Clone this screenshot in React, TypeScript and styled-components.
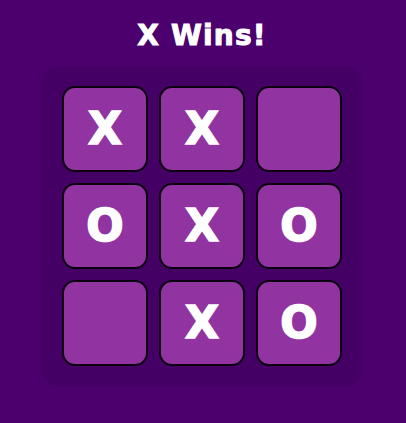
import React from "react";
import styled, { createGlobalStyle } from "styled-components";

const Global = createGlobalStyle`
  html, body { margin: 0; padding: 0; background: #4b006e; }
  body { font-family: "DejaVu Sans", "Liberation Sans", sans-serif; }
`;

const Page = styled.main`
  width: 406px;
  height: 423px;
  background: #4b006e;
  display: flex;
  flex-direction: column;
  align-items: center;
  box-sizing: border-box;
  padding-top: 19px;
  padding-right: 2px;
`;

const Title = styled.h1`
  margin: 0 0 13px;
  height: 34px;
  line-height: 34px;
  font-family: "DejaVu Sans", sans-serif;
  font-size: 28px;
  font-weight: 700;
  color: #ffffff;
  letter-spacing: 1.2px;
  -webkit-text-stroke: 1px #ffffff;
`;

const Board = styled.div`
  display: grid;
  grid-template-columns: repeat(3, 86px);
  grid-template-rows: repeat(3, 86px);
  gap: 11px;
  padding: 20px;
  background: #440064;
  border-radius: 16px;
`;

const Cell = styled.button<{ $mark: string }>`
  box-sizing: border-box;
  width: 86px;
  height: 86px;
  padding: 0;
  border: 2px solid #0a0010;
  border-radius: 13px;
  background: #9133a1;
  color: #ffffff;
  font-family: "DejaVu Sans", sans-serif;
  font-weight: 700;
  font-size: 44px;
  line-height: 1;
  -webkit-text-stroke: 1.6px #ffffff;
  display: flex;
  align-items: center;
  justify-content: center;
  cursor: pointer;
`;

const cells = ["X", "X", "", "O", "X", "O", "", "X", "O"];

export default function App() {
  return (
    <>
      <Global />
      <Page>
        <Title>X Wins!</Title>
        <Board>
          {cells.map((m, i) => (
            <Cell key={i} $mark={m}>
              {m}
            </Cell>
          ))}
        </Board>
      </Page>
    </>
  );
}
